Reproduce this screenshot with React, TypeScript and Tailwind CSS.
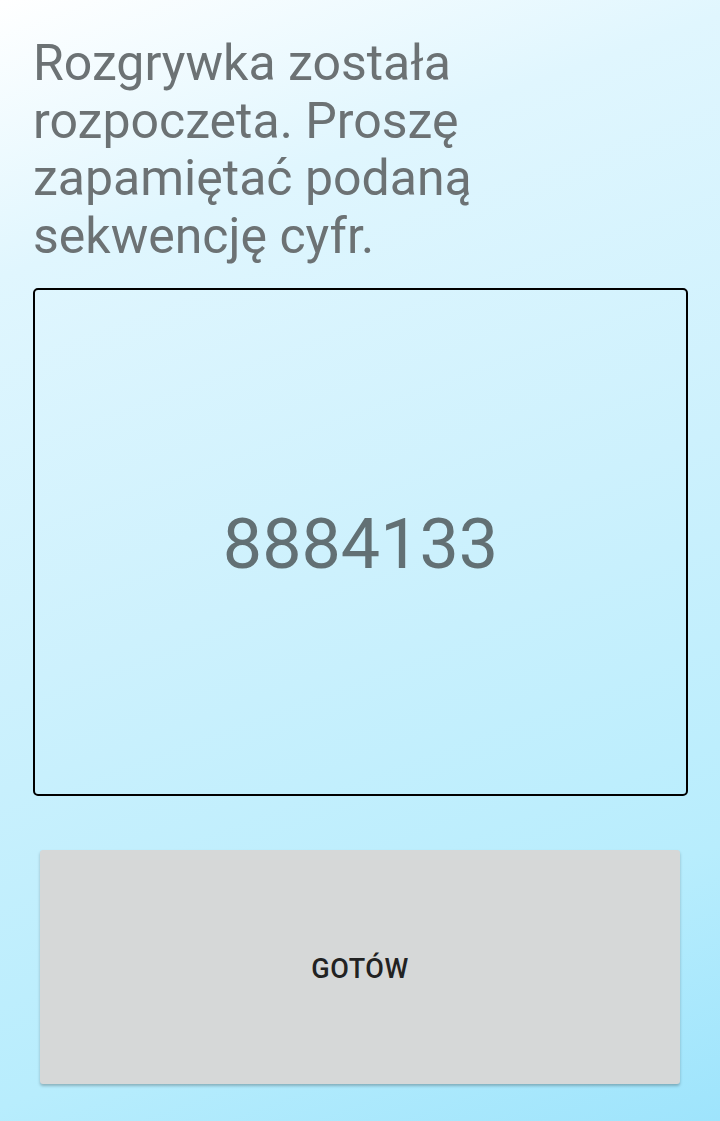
export default function App() {
  return (
    <div
      className="w-[720px] h-[1121px] overflow-hidden bg-[linear-gradient(160deg,#ffffff_0%,#e0f6fe_20%,#cdf1fd_50%,#b8edfd_80%,#9ee4fc_100%)] flex flex-col"
      style={{ fontFamily: "Roboto, 'Noto Sans', sans-serif" }}
    >
      {/* ── PROMPT ───────────────────────────────────────── */}
      <p className="mt-[35px] ml-[33px] mr-[33px] text-[50px] leading-[57.5px] text-[#6c7274] max-w-[480px]">
        Rozgrywka została rozpoczeta. Proszę zapamiętać podaną sekwencję cyfr.
      </p>

      {/* ── SEQUENCE BOX ─────────────────────────────────── */}
      <div className="mt-[23px] ml-[33px] w-[655px] h-[508px] border-2 border-black rounded-[5px] flex items-center justify-center">
        <span className="text-[70px] leading-none text-[#627074] mt-[4px]">8884133</span>
      </div>

      {/* ── READY BUTTON ─────────────────────────────────── */}
      <button className="mt-[54px] ml-[40px] w-[640px] h-[234px] rounded-[3px] bg-[#d6d8d8] shadow-[0_2px_3px_rgba(0,0,0,0.25)] text-[27px] font-medium text-[#222222] tracking-[0.5px] pt-[4px]">
        GOTÓW
      </button>
    </div>
  );
}
